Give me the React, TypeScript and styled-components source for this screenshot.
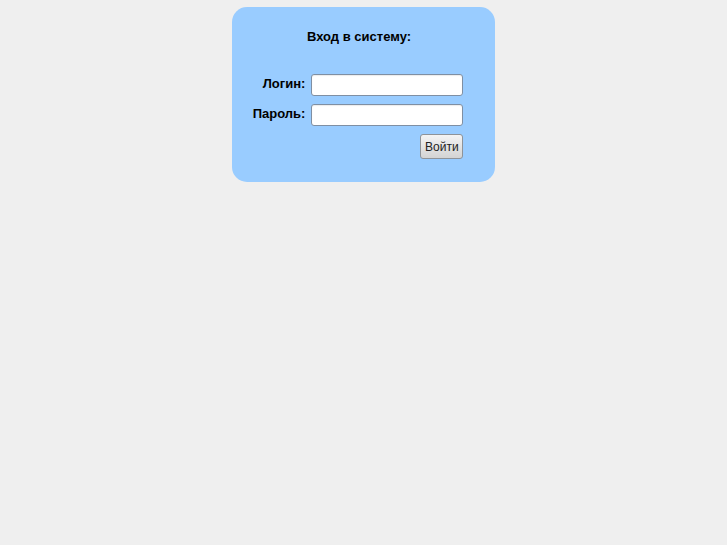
import React from "react";
import styled, { createGlobalStyle } from "styled-components";

const Global = createGlobalStyle`
  html, body { margin: 0; padding: 0; background: #efefef; }
  body { font-family: "Liberation Sans", Arial, sans-serif; }
`;

const Page = styled.div`
  display: flex;
  justify-content: center;
  padding-top: 7px;
`;

const Panel = styled.div`
  width: 263px;
  height: 175px;
  box-sizing: border-box;
  background: #99ccff;
  border-radius: 15px;
  padding: 22px 11px 0 0;
  display: flex;
  flex-direction: column;
  align-items: center;
`;

const Title = styled.div`
  font-size: 13px;
  font-weight: bold;
  color: #000;
  line-height: 15px;
  margin: 0 0 30px 2px;
`;

const Form = styled.form`
  display: grid;
  grid-template-columns: auto 152px;
  column-gap: 6px;
  row-gap: 8px;
  align-items: center;
  margin: 0;
`;

const Label = styled.label`
  font-size: 13px;
  font-weight: bold;
  line-height: 15px;
  padding-bottom: 3px;
  color: #000;
  text-align: right;
`;

const Input = styled.input`
  width: 152px;
  height: 22px;
  box-sizing: border-box;
  border: 1px solid #7f8fa3;
  border-radius: 3px;
  background: #fff;
  margin: 0;
  padding: 2px 4px;
  font-family: "Liberation Sans", sans-serif;
  font-size: 12px;
  box-shadow: inset 0 1px 1px rgba(0, 0, 0, 0.08);
`;

const ButtonCell = styled.div`
  grid-column: 2;
  display: flex;
  justify-content: flex-end;
`;

const Button = styled.button`
  width: 43px;
  height: 25px;
  box-sizing: border-box;
  border: 1px solid #8e9399;
  border-radius: 3px;
  background: linear-gradient(#f4f4f4, #d3d3d3);
  font-family: "Liberation Sans", sans-serif;
  font-size: 12px;
  color: #222;
  padding: 0;
  margin: 0;
`;

export default function App() {
  return (
    <>
      <Global />
      <Page>
        <Panel>
          <Title>Вход в систему:</Title>
          <Form onSubmit={(e) => e.preventDefault()}>
            <Label htmlFor="login">Логин:</Label>
            <Input id="login" type="text" />
            <Label htmlFor="pass">Пароль:</Label>
            <Input id="pass" type="password" />
            <ButtonCell>
              <Button type="submit">Войти</Button>
            </ButtonCell>
          </Form>
        </Panel>
      </Page>
    </>
  );
}
